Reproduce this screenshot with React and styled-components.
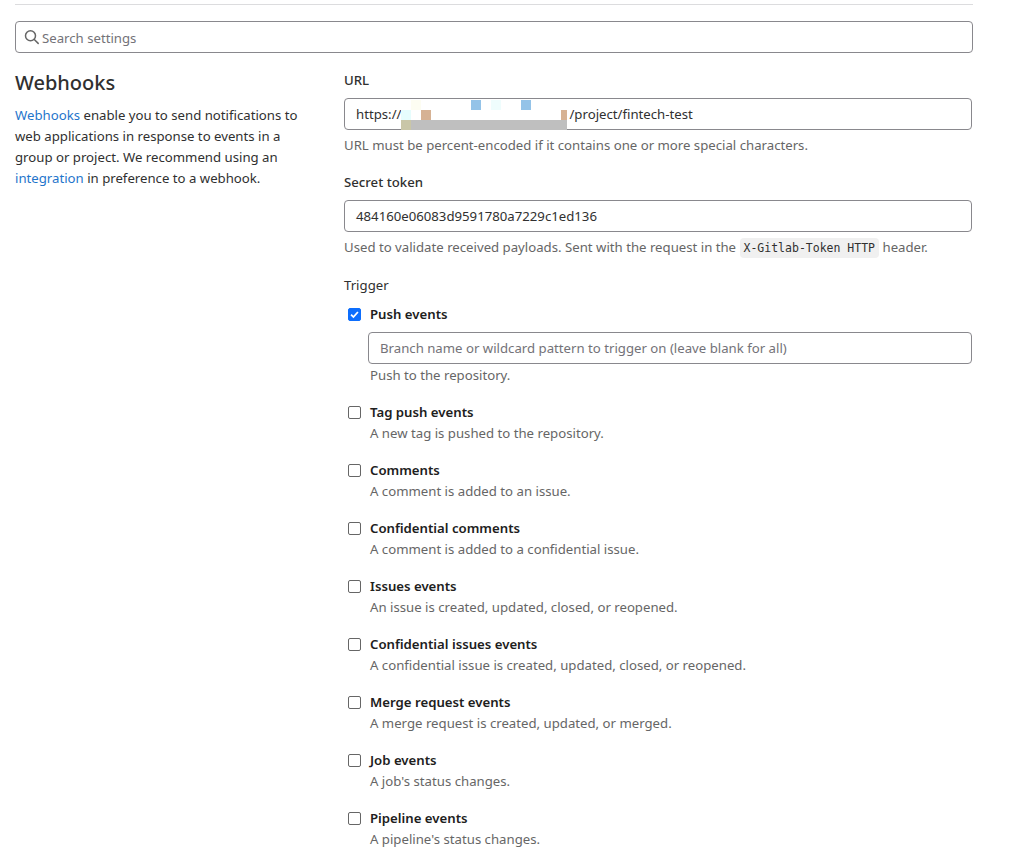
import React from 'react';
import styled, { createGlobalStyle } from 'styled-components';

const Global = createGlobalStyle`
  html, body { margin: 0; padding: 0; background: #fff; height: 849px; overflow: hidden; }
  body { font-family: "Noto Sans", "Open Sans", Arial, sans-serif; font-size: 13.2px; color: #303030; }
`;

const Page = styled.div`
  width: 958px;
  margin-left: 15px;
  padding-top: 4px;
`;

const Rule = styled.div`
  height: 1px;
  background: #dcdcde;
`;

const SearchBox = styled.div`
  margin-top: 16px;
  height: 32px;
  box-sizing: border-box;
  border: 1px solid #89888d;
  border-radius: 4px;
  display: flex;
  align-items: center;
  padding: 1px 0 0 8px;
  gap: 2px;
  color: #737278;
  svg { color: #666; margin-top: -2px; }
`;

const Columns = styled.div`
  display: grid;
  grid-template-columns: 329px 628px;
  margin-top: 15px;
`;

const Side = styled.aside`
  padding-top: 0;
`;

const Title = styled.h4`
  margin: 0 0 7px;
  font-size: 20px;
  font-weight: 500;
  line-height: 30px;
  color: #303030;
`;

const Para = styled.p`
  margin: 0;
  width: 290px;
  line-height: 21px;
`;

const Link = styled.a`
  color: #1f75cb;
  text-decoration: none;
`;

const Main = styled.form`
  display: flex;
  flex-direction: column;
  padding-top: 2px;
`;

const Group = styled.div`
  margin-bottom: ${(p) => p.$mb}px;
`;

const Label = styled.div`
  font-weight: ${(p) => (p.$plain ? 400 : 500)};
  line-height: 20px;
  margin-bottom: ${(p) => (p.$plain ? 9 : 8)}px;
  color: #303030;
`;

const Field = styled.div`
  position: relative;
  box-sizing: border-box;
  height: 32px;
  border: 1px solid #89888d;
  border-radius: 4px;
  padding: 0 11px;
  display: flex;
  align-items: center;
  color: ${(p) => (p.$placeholder ? '#737278' : '#303030')};
  white-space: pre;
`;

const Gap = styled.span`
  display: inline-block;
  width: 168px;
`;

const Mosaic = styled.svg`
  position: absolute;
  left: 56px;
  top: 1px;
`;

const Help = styled.div`
  margin-top: 5px;
  line-height: 20px;
  color: #666;
`;

const Code = styled.code`
  font-family: "DejaVu Sans Mono", "Liberation Mono", monospace;
  font-size: 11.5px;
  background: #f0f0f0;
  border-radius: 4px;
  padding: 3px 4px;
  color: #303030;
`;

const Option = styled.div`
  display: grid;
  grid-template-columns: 13px 1fr;
  column-gap: 9px;
  margin-left: 4px;
  margin-bottom: 17px;
`;

const Box = styled.span`
  width: 13px;
  height: 13px;
  margin-top: 4px;
  box-sizing: border-box;
  border-radius: 2px;
  border: 1px solid ${(p) => (p.$on ? '#0d6efd' : '#666')};
  background: ${(p) => (p.$on ? '#0d6efd' : '#fff')};
  display: flex;
  align-items: center;
  justify-content: center;
`;

const OptionTitle = styled.div`
  font-weight: 600;
  line-height: 20px;
  color: #202020;
`;

const OptionText = styled.div`
  line-height: 20px;
  margin-top: 1px;
  color: #666;
`;

const BranchField = styled(Field)`
  margin: 8px 0 1px -2px;
`;

const options = [
  ['Tag push events', 'A new tag is pushed to the repository.'],
  ['Comments', 'A comment is added to an issue.'],
  ['Confidential comments', 'A comment is added to a confidential issue.'],
  ['Issues events', 'An issue is created, updated, closed, or reopened.'],
  ['Confidential issues events', 'A confidential issue is created, updated, closed, or reopened.'],
  ['Merge request events', 'A merge request is created, updated, or merged.'],
  ['Job events', "A job's status changes."],
  ['Pipeline events', "A pipeline's status changes."],
];

const mosaic = [
  [10, 0, 10, 10, '#fdfdf2'],
  [70, 0, 10, 10, '#94c3e8'],
  [90, 0, 10, 10, '#effdfd'],
  [120, 0, 10, 10, '#94c3e8'],
  [0, 10, 10, 10, '#e6fdfd'],
  [20, 10, 10, 10, '#d6b294'],
  [160, 10, 6, 10, '#d6b294'],
  [0, 20, 10, 10, '#c9c6a8'],
  [10, 20, 156, 10, '#bfbfbf'],
];

export default function App() {
  return (
    <>
      <Global />
      <Page>
        <Rule />
        <SearchBox>
          <svg width="16" height="16" viewBox="0 0 16 16" fill="none" stroke="currentColor" strokeWidth="1.5">
            <circle cx="6.5" cy="6.7" r="5" />
            <path d="M10.3 10.5l3.9 3.9" strokeLinecap="round" />
          </svg>
          Search settings
        </SearchBox>
        <Columns>
          <Side>
            <Title>Webhooks</Title>
            <Para>
              <Link>Webhooks</Link> enable you to send notifications to web applications in response to events in a group or project. We recommend using an <Link>integration</Link> in preference to a webhook.
            </Para>
          </Side>
          <Main>
            <Group $mb={17}>
              <Label>URL</Label>
              <Field>
                https://<Gap />/project/fintech-test
                <Mosaic width="166" height="30" aria-hidden="true">
                  {mosaic.map(([x, y, w, h, c], i) => (
                    <rect key={i} x={x} y={y} width={w} height={h} fill={c} />
                  ))}
                </Mosaic>
              </Field>
              <Help>URL must be percent-encoded if it contains one or more special characters.</Help>
            </Group>
            <Group $mb={17}>
              <Label>Secret token</Label>
              <Field>484160e06083d9591780a7229c1ed136</Field>
              <Help>
                Used to validate received payloads. Sent with the request in the <Code>X-Gitlab-Token HTTP</Code> header.
              </Help>
            </Group>
            <Label $plain>Trigger</Label>
            <Option>
              <Box $on>
                <svg width="9" height="9" viewBox="0 0 10 10" fill="none" stroke="#fff" strokeWidth="2">
                  <path d="M1.2 5.2l2.6 2.6 5-5.6" />
                </svg>
              </Box>
              <div>
                <OptionTitle>Push events</OptionTitle>
                <BranchField $placeholder>Branch name or wildcard pattern to trigger on (leave blank for all)</BranchField>
                <OptionText>Push to the repository.</OptionText>
              </div>
            </Option>
            {options.map(([t, d]) => (
              <Option key={t}>
                <Box />
                <div>
                  <OptionTitle>{t}</OptionTitle>
                  <OptionText>{d}</OptionText>
                </div>
              </Option>
            ))}
          </Main>
        </Columns>
      </Page>
    </>
  );
}
